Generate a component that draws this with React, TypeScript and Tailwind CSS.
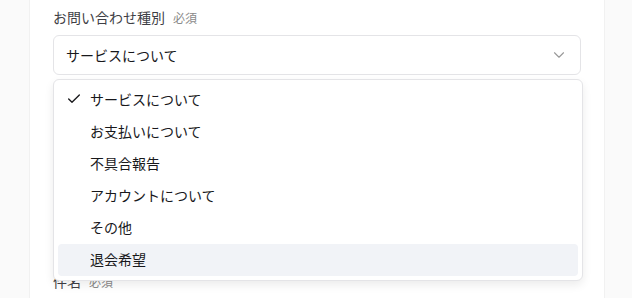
import { Check, ChevronDown } from "lucide-react";

const options = [
  "サービスについて",
  "お支払いについて",
  "不具合報告",
  "アカウントについて",
  "その他",
  "退会希望",
];

function Field({ label, children }: { label: string; children: React.ReactNode }) {
  return (
    <div className="flex flex-col gap-2">
      <div className="flex items-baseline gap-2 h-5">
        <span className="text-[14px] leading-5 text-[#3f3f46]">{label}</span>
        <span className="text-[12px] leading-5 text-[#8a8a8a]">必須</span>
      </div>
      {children}
    </div>
  );
}

export default function App() {
  const selected = 0;
  const highlighted = 5;

  return (
    <div
      className="h-[298px] overflow-hidden bg-[#fafafa]"
      style={{ fontFamily: '"Noto Sans CJK JP", "Noto Sans", sans-serif' }}
    >
      <div className="ml-[29px] w-[576px] h-full bg-white border-x border-[#f1f1f1] px-[23px] pt-[7px]">
        <div className="flex flex-col gap-[196px]">
          {/* 種別 */}
          <div className="relative z-10">
            <Field label="お問い合わせ種別">
              <button className="flex h-10 w-full items-center justify-between rounded-md border border-[#e4e4e7] bg-white pl-3 pr-3 text-left text-[14px] text-[#18181b]">
                <span>{options[selected]}</span>
                <ChevronDown className="h-[18px] w-[18px] text-[#999]" strokeWidth={1.5} />
              </button>
            </Field>

            {/* Dropdown */}
            <div className="absolute left-0 right-[-2px] top-[72px] rounded-md border border-[#e4e4e7] bg-white p-1 shadow-[0_4px_10px_rgba(0,0,0,0.08)]">
              {options.map((opt, i) => (
                <div
                  key={opt}
                  className={
                    "relative flex h-8 items-center rounded-[4px] pl-8 pb-[2px] text-[14px] text-[#18181b] " +
                    (i === highlighted ? "bg-[#f1f3f7]" : "")
                  }
                >
                  {i === selected && (
                    <Check className="absolute left-2 top-[7px] h-4 w-4 text-[#18181b]" strokeWidth={2} />
                  )}
                  {opt}
                </div>
              ))}
            </div>
          </div>

          <Field label="件名">
            <div className="h-10 rounded-md border border-[#e4e4e7]" />
          </Field>
        </div>
      </div>
    </div>
  );
}
